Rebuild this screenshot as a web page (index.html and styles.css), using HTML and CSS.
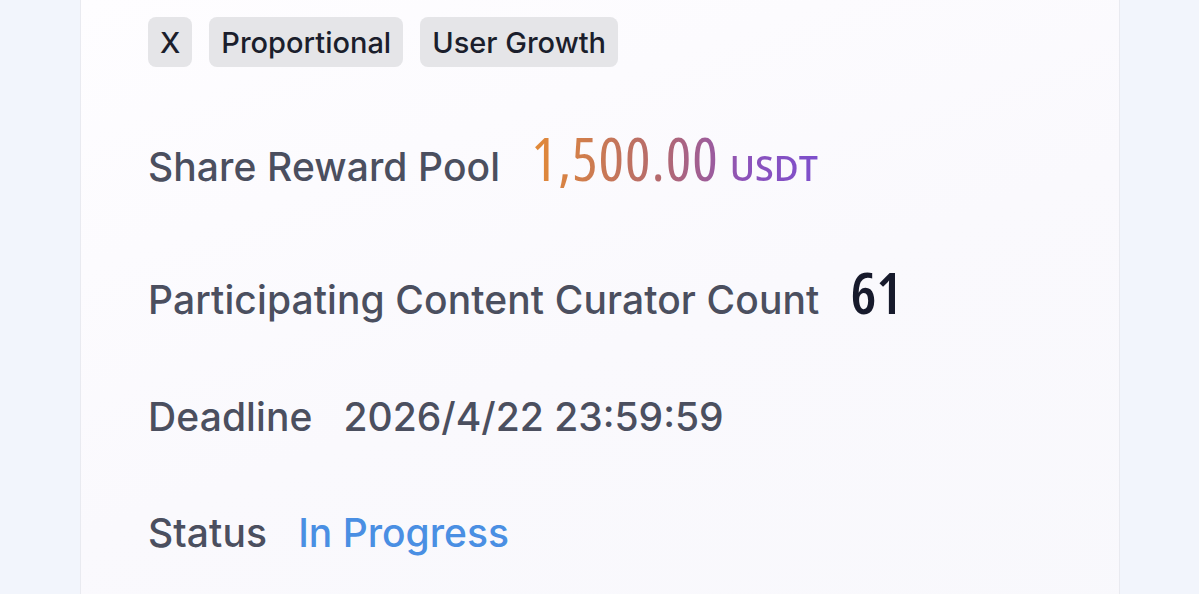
FILE: index.html
```html
<!DOCTYPE html>
<html lang="en">
<head>
<meta charset="utf-8">
<title>Task</title>
<link rel="stylesheet" href="styles.css">
</head>
<body>
<main class="card">
  <div class="tags">
    <span class="tag">X</span>
    <span class="tag">Proportional</span>
    <span class="tag">User Growth</span>
  </div>
  <div class="row row-pool">
    <span class="label">Share Reward Pool</span>
    <span class="amount"><span class="num">1,500.00</span><span class="unit">USDT</span></span>
  </div>
  <div class="row row-count">
    <span class="label">Participating Content Curator Count</span>
    <span class="count">61</span>
  </div>
  <div class="row row-deadline">
    <span class="label">Deadline</span>
    <span class="value">2026/4/22 23:59:59</span>
  </div>
  <div class="row row-status">
    <span class="label">Status</span>
    <span class="status">In Progress</span>
  </div>
</main>
</body>
</html>
```
FILE: styles.css
```css
html, body {
  margin: 0;
  height: 100%;
}
body {
  background: #f2f5fc;
  font-family: Inter, "Noto Sans", sans-serif;
  overflow: hidden;
}
.card {
  margin: 0 79px 0 80px;
  min-height: 700px;
  box-sizing: border-box;
  border-left: 1px solid #e9eaf0;
  border-right: 1px solid #e9eaf0;
  background: linear-gradient(160deg, #fefdff 0%, #faf9fd 50%, #f8f8fc 100%);
  padding: 17px 0 0 67px;
}
.tags {
  display: flex;
  gap: 17px;
}
.tag {
  height: 50px;
  display: flex;
  align-items: center;
  padding: 0 12px;
  border-radius: 8px;
  background: #e5e5e8;
  color: #1b1e2c;
  font-size: 29px;
  font-weight: 500;
}
.row {
  display: flex;
  align-items: baseline;
  gap: 31px;
  line-height: 1;
  color: #4b4f5f;
}
.label {
  font-size: 39px;
  font-weight: 500;
  letter-spacing: 0.1px;
}
.row-pool { margin-top: 61px; }
.row-count { margin-top: 75px; }
.row-deadline { margin-top: 76px; }
.row-status { margin-top: 77px; }
.amount {
  display: flex;
  align-items: baseline;
  gap: 11px;
  background: linear-gradient(90deg, #e38a36 0%, #b46a6e 45%, #8c52bb 75%, #7d4fcc 100%);
  -webkit-background-clip: text;
  background-clip: text;
  color: transparent;
}
.num, .count {
  font-family: "Open Sans", "Noto Sans", sans-serif;
  font-stretch: 75%;
  font-size: 60px;
  font-weight: 500;
}
.num {
  letter-spacing: 1px;
}
.unit {
  font-family: "Open Sans", "Noto Sans", sans-serif;
  font-size: 34px;
  font-weight: 600;
}
.count {
  color: #171a2c;
  font-size: 58px;
  font-weight: 600;
}
.value {
  font-size: 39px;
  font-weight: 500;
}
.status {
  font-size: 39px;
  font-weight: 500;
  color: #4a8fe3;
}
```
